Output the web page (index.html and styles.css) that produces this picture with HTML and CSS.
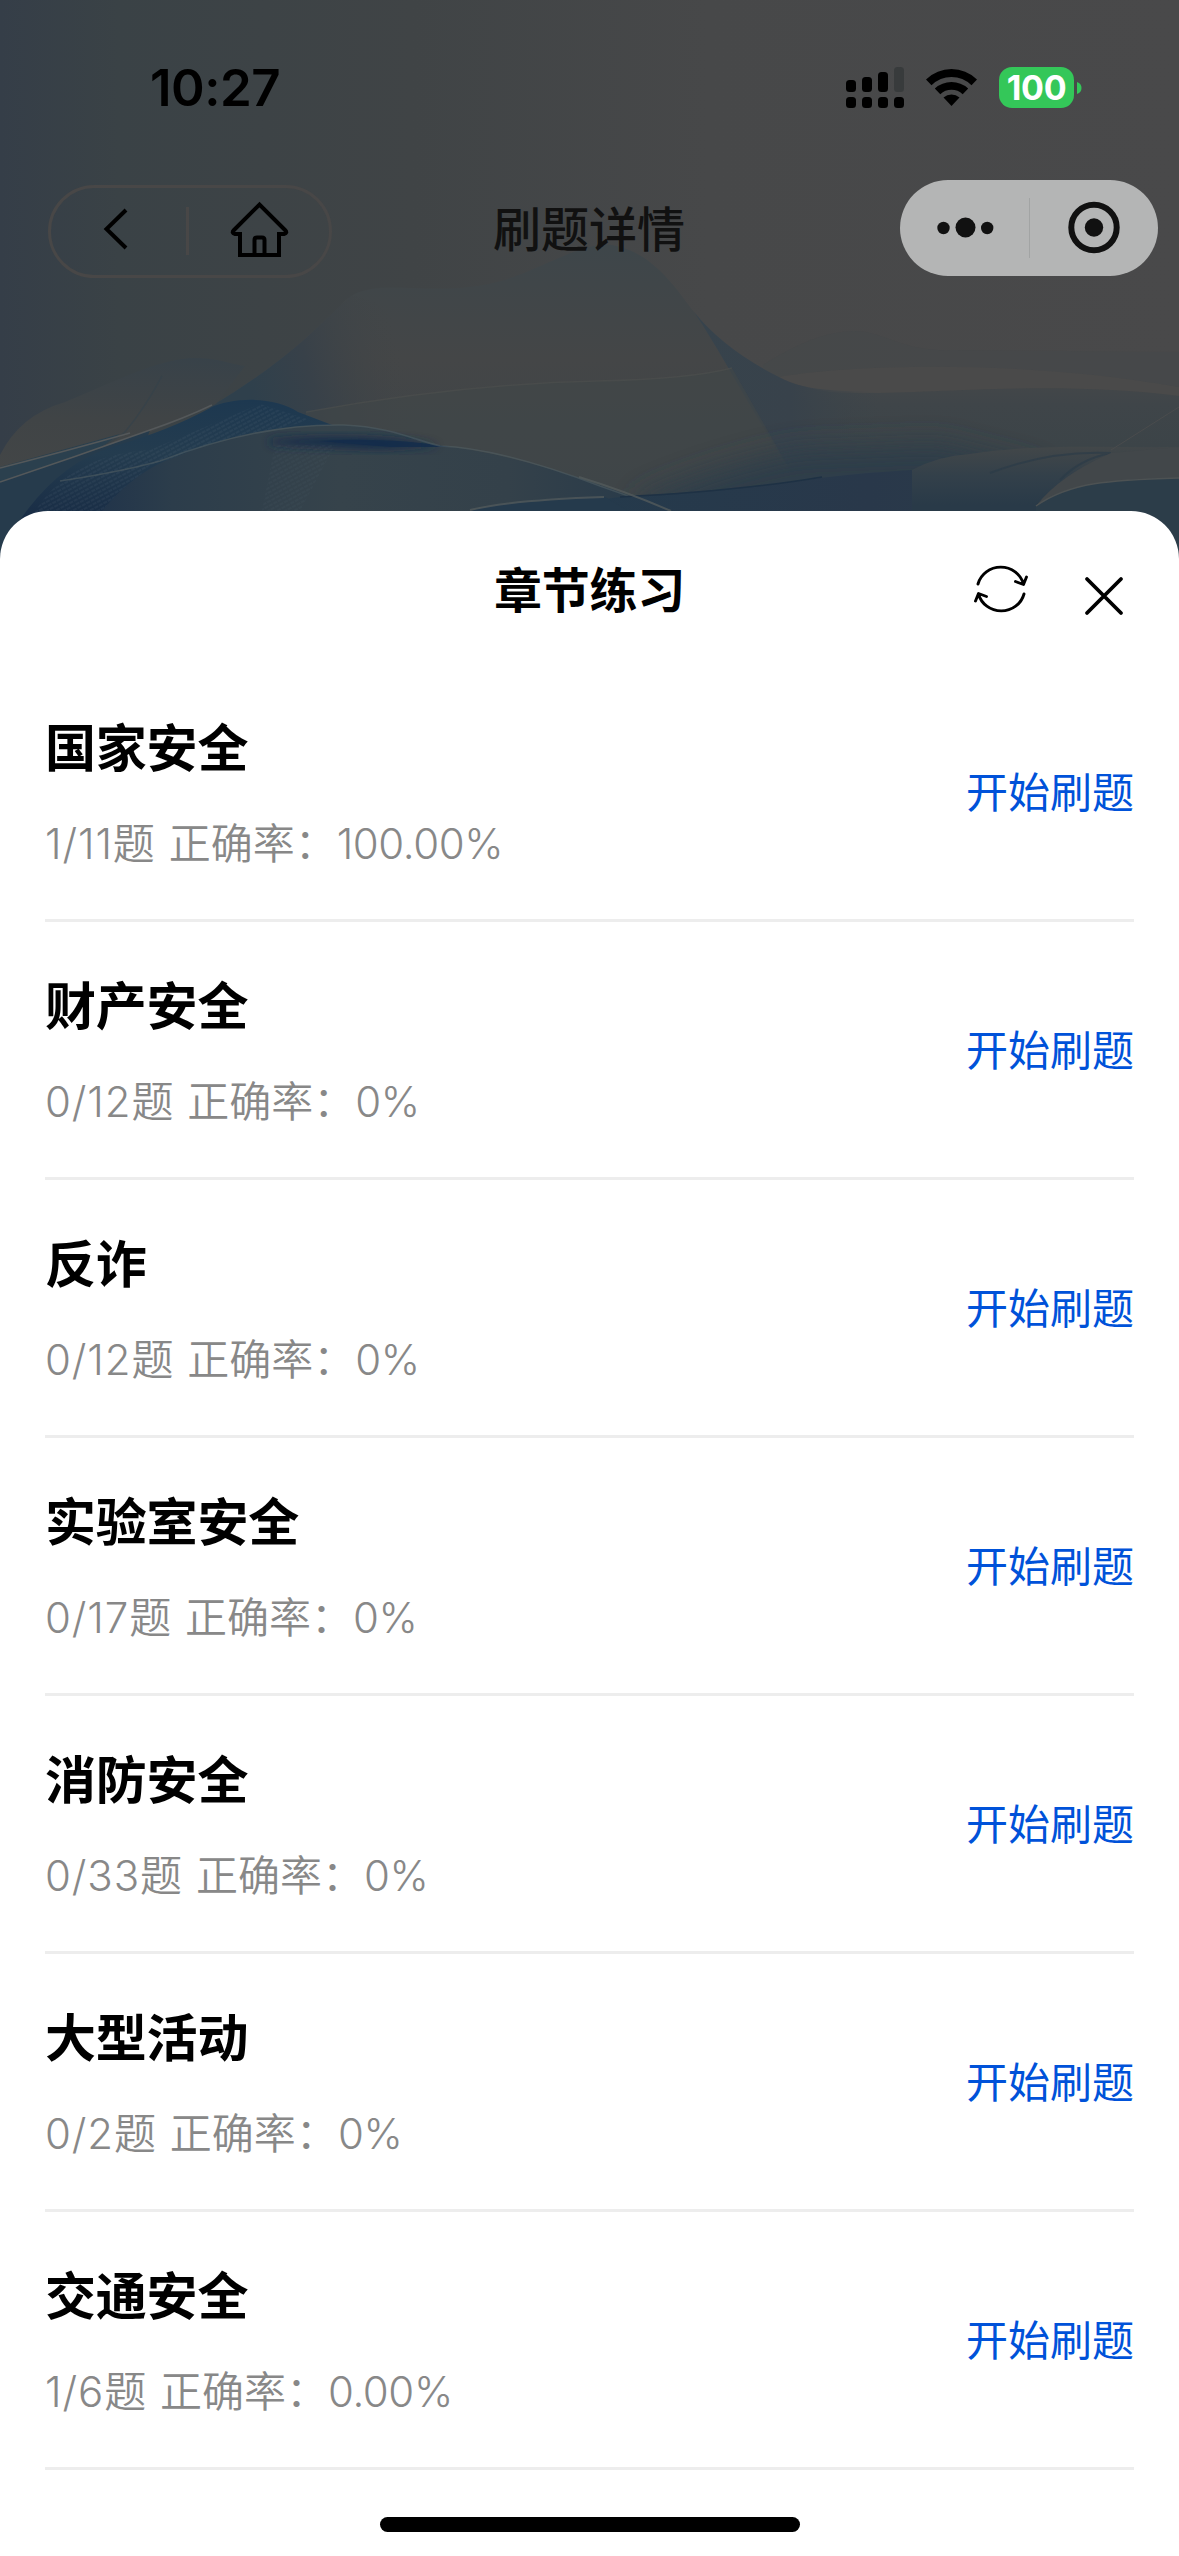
FILE: index.html
```html
<!DOCTYPE html>
<html lang="zh-CN">
<head>
<meta charset="utf-8">
<title>刷题详情</title>
<link rel="stylesheet" href="styles.css">
</head>
<body>
<div class="screen">
  <svg class="backdrop" viewBox="0 0 1179 600" aria-hidden="true">
    <defs>
      <linearGradient id="sky" x1="0" y1="0" x2="1" y2="0">
        <stop offset="0" stop-color="#353e48"/><stop offset=".1" stop-color="#3a4246"/><stop offset=".35" stop-color="#404446"/><stop offset=".6" stop-color="#474849"/><stop offset="1" stop-color="#49494a"/>
      </linearGradient>
      <linearGradient id="hill" x1="0" y1="245" x2="0" y2="500" gradientUnits="userSpaceOnUse">
        <stop offset="0" stop-color="#3e464a"/><stop offset=".45" stop-color="#444647"/><stop offset="1" stop-color="#3d4449"/>
      </linearGradient>
      <linearGradient id="hillLeft" x1="250" y1="390" x2="400" y2="350" gradientUnits="userSpaceOnUse">
        <stop offset="0" stop-color="#2f404c"/><stop offset=".4" stop-color="#384149"/><stop offset="1" stop-color="#424546" stop-opacity="0"/>
      </linearGradient>
      <linearGradient id="veil" x1="0" y1="358" x2="0" y2="480" gradientUnits="userSpaceOnUse">
        <stop offset="0" stop-color="#384249"/><stop offset=".5" stop-color="#404446"/><stop offset="1" stop-color="#434647"/>
      </linearGradient>
      <linearGradient id="deep" x1="0" y1="400" x2="0" y2="520" gradientUnits="userSpaceOnUse">
        <stop offset="0" stop-color="#1d3850"/><stop offset=".45" stop-color="#243c4f"/><stop offset="1" stop-color="#182c45"/>
      </linearGradient>
      <linearGradient id="front" x1="60" y1="0" x2="620" y2="0" gradientUnits="userSpaceOnUse">
        <stop offset="0" stop-color="#1c304a"/><stop offset=".2" stop-color="#2c3d4b"/><stop offset=".5" stop-color="#36434b"/><stop offset=".8" stop-color="#34414a"/><stop offset="1" stop-color="#2b3c4a"/>
      </linearGradient>
      <linearGradient id="right" x1="0" y1="370" x2="0" y2="510" gradientUnits="userSpaceOnUse">
        <stop offset="0" stop-color="#464849"/><stop offset=".25" stop-color="#3f4549"/><stop offset=".55" stop-color="#3c4448"/><stop offset=".8" stop-color="#303e48"/><stop offset="1" stop-color="#293a48"/>
      </linearGradient>
      <linearGradient id="fold" x1="700" y1="0" x2="880" y2="0" gradientUnits="userSpaceOnUse">
        <stop offset="0" stop-color="#37434c"/><stop offset=".5" stop-color="#38424b"/><stop offset="1" stop-color="#3b4449" stop-opacity="0"/>
      </linearGradient>
      <linearGradient id="crest" x1="0" y1="447" x2="0" y2="505" gradientUnits="userSpaceOnUse">
        <stop offset="0" stop-color="#424749"/><stop offset=".5" stop-color="#33404a"/><stop offset="1" stop-color="#293a48"/>
      </linearGradient>
      <linearGradient id="floor" x1="560" y1="0" x2="1179" y2="0" gradientUnits="userSpaceOnUse">
        <stop offset="0" stop-color="#243a4c"/><stop offset=".5" stop-color="#29384a"/><stop offset="1" stop-color="#2d3e49"/>
      </linearGradient>
      <pattern id="grain" width="5" height="4" patternUnits="userSpaceOnUse" patternTransform="rotate(-28)">
        <path d="M0 1H4" stroke="#5a6f80" stroke-width=".7" opacity=".35"/>
      </pattern>
      <filter id="soft" x="-20%" y="-50%" width="140%" height="200%"><feGaussianBlur stdDeviation="5"/></filter>
      <filter id="haze" x="-30%" y="-60%" width="160%" height="220%"><feGaussianBlur stdDeviation="14"/></filter>
    </defs>
    <rect width="1179" height="600" fill="url(#sky)"/>
    <path d="M763 365Q816 331 854 331C885 331 900 352 954 350L1179 352V400H763Z" fill="#44484a" opacity=".5"/>
    <path d="M778 377C870 368 1040 362 1179 387V600H700V377Z" fill="url(#right)"/>
    <path d="M778 377C870 362 1040 362 1179 387V396C1040 378 900 398 830 392Q800 388 778 377Z" fill="#4a4a4a"/>
    <path d="M694 312Q725 350 779 377C800 388 820 392 900 392V480H770Z" fill="url(#fold)"/>
    <path d="M210 407Q264 375 306 338L341 305C370 270 430 302 505 280C550 265 580 243 612 245C655 252 680 295 694 312C720 350 745 400 790 470L760 600H200Z" fill="url(#hill)"/>
    <path d="M210 407Q264 375 306 338L341 305 352 295 440 320V430H210Z" fill="url(#hillLeft)"/>
    <path d="M306 412Q459 384 597 381 690 379 732 368L790 470 760 500H560L306 420Z" fill="#414648" opacity=".65"/>
    <path d="M306 412Q459 384 597 381 690 379 732 368" fill="none" stroke="#50514f" stroke-width="1.500" opacity=".5"/>
    <path d="M640 500Q720 465 800 450L940 445 1040 470V520H640Z" fill="#2d3d49" filter="url(#haze)"/>
    <path d="M0 455Q20 415 65 402C110 384 150 362 190 358 215 357 230 364 245 366L216 404 100 454 0 480Z" fill="url(#veil)"/>
    <path d="M162 376Q145 408 125 432 110 445 77 455" fill="none" stroke="#35414a" stroke-width="1.5" opacity=".7"/>
    <path d="M0 467L120 434 90 455 0 484Z" fill="#2b404e"/>
    <path d="M0 482Q80 456 150 430L90 600H0Z" fill="#263b4c"/>
    <path d="M0 468Q70 450 130 433M0 482Q75 457 150 430 185 418 212 405" fill="none" stroke="#54585a" stroke-width="1.5"/>
    <path d="M20 520Q60 462 115 446 170 430 210 408C232 397 275 396 298 412L340 428V520Z" fill="url(#deep)"/>
    <path d="M30 520Q65 455 150 450L260 404 310 420 150 465 95 520Z" fill="url(#grain)"/>
    <path d="M95 520Q130 473 175 457C240 431 290 424 344 425 390 427 415 438 440 446Q520 452 671 511Z" fill="url(#front)"/>
    <path d="M270 440Q365 432 440 446L380 449Q320 447 270 444Z" fill="#132b48" filter="url(#soft)"/>
    <path d="M320 441Q390 437 450 447H390Z" fill="#132c4b" opacity=".8"/>
    <path d="M275 445H335L300 511H262Z" fill="url(#grain)" opacity=".6"/>
    <path d="M60 481Q120 472 160 461C230 434 288 424 344 425 390 427 415 440 440 446Q500 448 600 486L671 511" fill="none" stroke="#505d62" stroke-width="1.600" opacity=".6"/>
    <path d="M620 497Q740 490 820 478 970 460 1179 470V600H560V505Z" fill="url(#floor)"/>
    <path d="M620 497Q740 491 822 477" fill="none" stroke="#1e3144" stroke-width="1.500"/>
    <path d="M470 511Q510 498 605 497L630 512Z" fill="#253a4c"/>
    <path d="M470 510Q510 500 604 497M579 477Q625 491 671 511" fill="none" stroke="#535a5b" stroke-width="2" opacity=".8"/>
    <path d="M912 470Q938 456 970 454C1040 443 1110 448 1179 447V520H912Z" fill="url(#crest)"/>
    <path d="M990 473Q1050 450 1111 453M1060 480Q1080 459 1111 453" fill="none" stroke="#293a47" stroke-width="2" opacity=".6"/>
    <path d="M1036 506Q1060 475 1111 453L1179 447V478C1110 480 1070 482 1036 506Z" fill="#42474a"/>
    <path d="M1036 506C1070 482 1110 480 1179 478V600H1036Z" fill="#2c3d49"/>
    <path d="M1036 506C1070 482 1110 480 1179 478" fill="none" stroke="#4d5253" stroke-width="1.5"/>
    <path d="M1111 450L1179 407" stroke="#4a4c4d" stroke-width="1"/>
  </svg>

  <header class="status">
    <span class="clock">10:27</span>
    <div class="indicators">
      <svg width="58" height="41" viewBox="0 0 58 41">
        <rect y="13" width="10" height="12" rx="3.5"/><rect x="16" y="10" width="10" height="15" rx="3.5"/><rect x="32" y="5" width="10" height="20" rx="3.5"/><rect x="48" width="10" height="25" rx="3.5" fill="#383b3c"/>
        <rect y="30" width="10" height="11" rx="3.5"/><rect x="16" y="30" width="10" height="11" rx="3.5"/><rect x="32" y="30" width="10" height="11" rx="3.5"/><rect x="48" y="30" width="10" height="11" rx="3.5"/>
      </svg>
      <svg class="wifi" width="51" height="37" viewBox="0 0 51 37">
        <path d="M0 10.5Q11 0 25.500 0T51 10.500L45.500 16.200Q37 8 25.500 8T5.500 16.200Z"/>
        <path d="M8.800 19.500Q16 13 25.500 13T42.200 19.500L36.700 25.200Q32 20.800 25.500 20.800T14.300 25.200Z"/>
        <path d="M17.500 28.500Q21 25.500 25.500 25.500T33.500 28.500L25.500 37Z"/>
      </svg>
      <div class="battery"><span class="charge">100</span></div>
      <svg width="5" height="12" viewBox="0 0 5 12"><path d="M0 0Q4.500 1.500 4.500 6T0 12Z" fill="#34c759"/></svg>
    </div>
  </header>

  <nav class="navbar">
    <div class="nav-pill">
      <svg width="284" height="93" viewBox="0 0 284 93" fill="none" stroke="#000" stroke-width="4">
        <rect x="1.500" y="1.500" width="281" height="90" rx="45" stroke="#484747" stroke-width="3"/>
        <path d="M139.500 22V70" stroke="#484747" stroke-width="3"/>
        <path d="M78 25L58.500 44 78 63"/>
        <path d="M192 70V49H187Q183 48 186 45L211.500 19.500 237 45Q240 48 236 49H231V70ZM206.500 70V55Q206.500 52.500 209 52.500H214Q216.500 52.500 216.500 55V70"/>
      </svg>
    </div>
    <h1 class="nav-title">刷题详情</h1>
    <div class="capsule">
      <svg width="258" height="96" viewBox="0 0 258 96" fill="#111">
        <circle cx="43.500" cy="48" r="6.200"/><circle cx="65.500" cy="47.500" r="10"/><circle cx="87.200" cy="48" r="6.200"/>
        <path d="M129.500 18V78" stroke="#a2a4a4"/>
        <circle cx="194" cy="47.500" r="22.700" fill="none" stroke="#111" stroke-width="6"/><circle cx="194" cy="47.500" r="9.200"/>
      </svg>
    </div>
  </nav>

  <main class="sheet">
    <div class="sheet-head">
      <h2 class="sheet-title">章节练习</h2>
      <div class="tools">
        <svg width="56" height="52" viewBox="-28 -26 56 52" fill="none" stroke="#000" stroke-width="2.900" stroke-linecap="round" stroke-linejoin="round">
          <path d="M-23-5A23.500 22.500 0 0 1 22.500-5M14.500-7.500L22.500-4.500 25.500-12"/>
          <path d="M23 5A23.500 22.500 0 0 1-22.500 5M-14.500 7.500L-22.500 4.500-25.500 12"/>
        </svg>
        <svg class="close" width="40" height="40" viewBox="0 0 40 40" stroke="#000" stroke-width="3.800" stroke-linecap="round"><path d="M3 3L37 37M37 3L3 37"/></svg>
      </div>
    </div>
    <ul class="chapters">
      <li class="chapter"><div><h3 class="name">国家安全</h3><p class="stat"><span class="count">1/11</span>题 正确率：<span class="rate">100.00%</span></p></div><a class="start">开始刷题</a></li>
      <li class="chapter"><div><h3 class="name">财产安全</h3><p class="stat"><span class="count">0/12</span>题 正确率：<span class="rate">0%</span></p></div><a class="start">开始刷题</a></li>
      <li class="chapter"><div><h3 class="name">反诈</h3><p class="stat"><span class="count">0/12</span>题 正确率：<span class="rate">0%</span></p></div><a class="start">开始刷题</a></li>
      <li class="chapter"><div><h3 class="name">实验室安全</h3><p class="stat"><span class="count">0/17</span>题 正确率：<span class="rate">0%</span></p></div><a class="start">开始刷题</a></li>
      <li class="chapter"><div><h3 class="name">消防安全</h3><p class="stat"><span class="count">0/33</span>题 正确率：<span class="rate">0%</span></p></div><a class="start">开始刷题</a></li>
      <li class="chapter"><div><h3 class="name">大型活动</h3><p class="stat"><span class="count">0/2</span>题 正确率：<span class="rate">0%</span></p></div><a class="start">开始刷题</a></li>
      <li class="chapter"><div><h3 class="name">交通安全</h3><p class="stat"><span class="count">1/6</span>题 正确率：<span class="rate">0.00%</span></p></div><a class="start">开始刷题</a></li>
    </ul>
    <div class="home-bar"></div>
  </main>
</div>
</body>
</html>
```
FILE: styles.css
```css
* { box-sizing: border-box; margin: 0; padding: 0; }

body {
  width: 1179px;
  font-family: Inter, "Noto Sans CJK SC", sans-serif;
  color: #000;
}

svg { display: block; flex: none; }

.screen {
  position: relative;
  display: flex;
  flex-direction: column;
  height: 2556px;
  overflow: hidden;
}

.backdrop {
  position: absolute;
  inset: 0 auto auto 0;
  width: 1179px;
  height: 600px;
  z-index: -1;
}

.status {
  display: flex;
  justify-content: space-between;
  align-items: center;
  height: 175px;
  padding: 0 97px 0 150px;
}

.clock { font-size: 51px; font-weight: 600; letter-spacing: -.5px; }

.indicators { display: flex; align-items: center; }
.wifi { margin: 0 22px; }

.battery {
  display: flex;
  align-items: center;
  justify-content: center;
  width: 75px;
  height: 41px;
  margin-right: 3px;
  border-radius: 13px;
  background: #34c759;
}

.charge { color: #fff; font-size: 34px; font-weight: 700; line-height: 41px; letter-spacing: -.3px; }

.navbar {
  display: grid;
  grid-template-columns: 1fr auto 1fr;
  align-items: center;
  height: 106px;
  padding: 0 21px 0 48px;
}

.nav-title {
  padding-top: 3px;
  font-size: 48px;
  font-weight: 500;
  line-height: 72px;
  color: #111;
  transform: translateX(-14px);
}

.nav-pill { padding-top: 7px; }

.capsule {
  justify-self: end;
  width: 258px;
  height: 96px;
  border-radius: 48px;
  background: #b4b5b5;
}

.sheet {
  display: flex;
  flex-direction: column;
  flex: 1;
  margin-top: 230px;
  border-radius: 48px 48px 0 0;
  background: #fff;
}

.sheet-head {
  display: grid;
  grid-template-columns: 1fr auto 1fr;
  align-items: center;
  height: 153px;
  padding: 6px 55px 0;
}

.sheet-title { grid-column: 2; font-size: 48px; font-weight: 700; line-height: 72px; letter-spacing: -.3px; }

.tools { display: flex; align-items: center; justify-self: end; gap: 55px; padding-bottom: 3px; }
.close { margin-top: 13px; }

.chapters { list-style: none; padding: 0 45px; }

.chapter {
  display: flex;
  justify-content: space-between;
  align-items: center;
  height: 258px;
  padding-top: 3px;
  border-bottom: 3px solid #ededed;
}

.name { font-size: 51px; font-weight: 700; line-height: 72px; letter-spacing: -.2px; }
.stat { margin-top: 29px; font-size: 42px; font-weight: 350; line-height: 60px; word-spacing: 2px; color: #888; white-space: pre; }
.count { letter-spacing: .9px; }
.rate { font-weight: 300; letter-spacing: -.4px; }
.start { font-size: 42px; font-weight: 400; line-height: 60px; color: #0052d9; }

.home-bar {
  width: 420px;
  height: 15px;
  margin: 47px auto 0;
  border-radius: 8px;
  background: #000;
}
```
